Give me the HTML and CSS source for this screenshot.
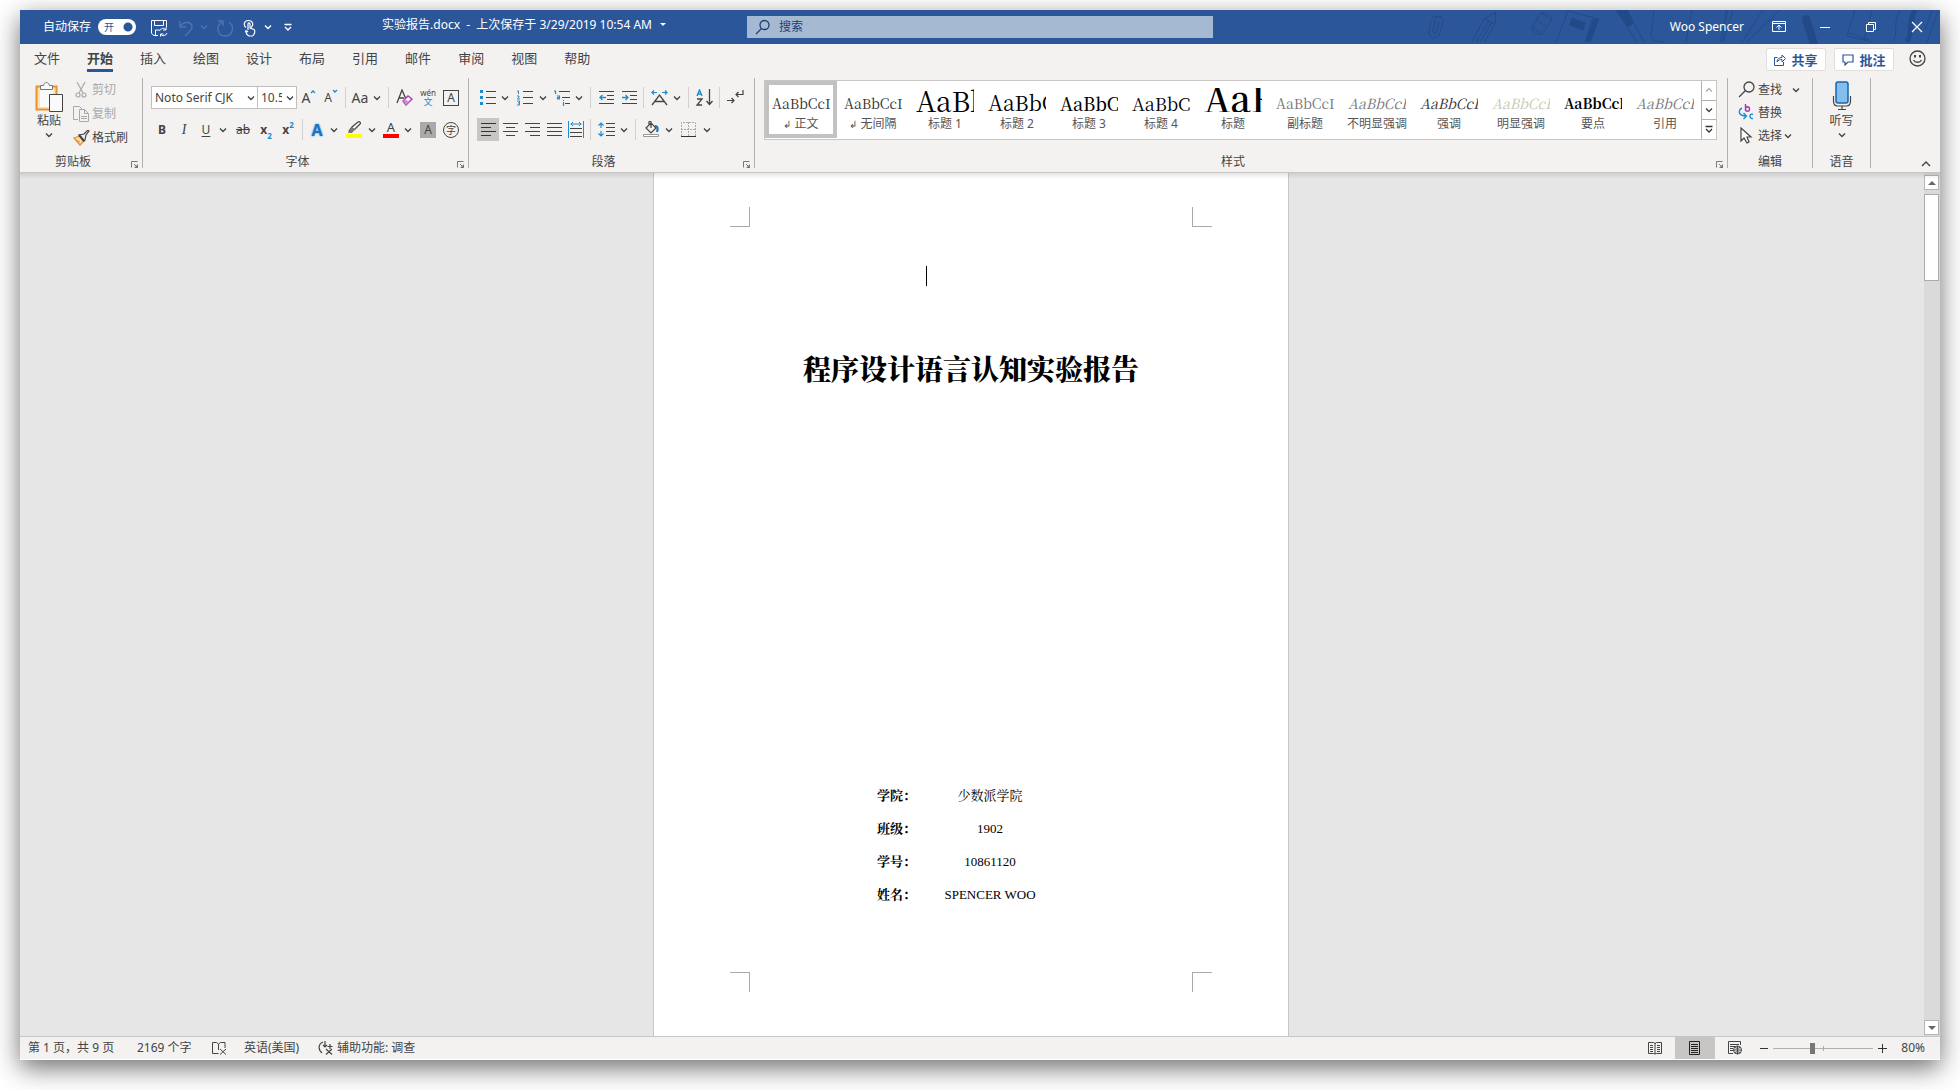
FILE: index.html
```html
<!DOCTYPE html>
<html lang="zh-CN">
<head>
<meta charset="utf-8">
<title>实验报告.docx</title>
<link rel="stylesheet" href="styles.css">
</head>
<body>
<svg class="sprite" aria-hidden="true">
  <symbol id="chev" viewBox="0 0 8 8"><path d="M1 2.500l3 3 3-3" fill="none" stroke="currentColor" stroke-width="1.400"/></symbol>
  <symbol id="launch" viewBox="0 0 8 8"><path d="M.5 6.500v-6h6M3 3l3 3" fill="none" stroke="#777"/><path d="M7 3v4H3z" fill="#777"/></symbol>
</svg>
<div class="window">
  <header class="titlebar">
    <svg class="pattern" viewBox="0 0 520 34" aria-hidden="true">
      <g fill="none" stroke="#234a88">
        <path d="M12 8c3-4 7 0 10-1M11 10l-2 12c0 7 9 8 11 1l3-13c0-5-7-5-8 0l-2 11c0 3 3 3 4 0l2-10"/>
        <path d="M76 2l-12 7-12 23M76 2l-1 12-11 18M64 9l5 2 6 3M69 11L56 32M72 12L60 32"/>
        <path d="M121 3l11 7-10 14-10-7zM116 10l11 7M121 3c2-2 12 3 11 7M112 17c-1 4 6 9 10 7"/>
        <path d="M148 1l-12 31M148 1l31 8-9 23M173 7l-8 25"/>
        <path d="M152 8l13 5-2 7-13-5z" fill="#234a88"/>
        <path d="M176 9l-8 23" stroke-width="5"/>
        <path d="M196 0h11l17 32M196 0l21 32"/><path d="M196 0h11l6 13-5 4z" fill="#234a88"/>
        <path d="M234 0l-3 25c0 5 6 7 14 7M272 0l-6 32M308 0l-8 32M313 0l-10 32M306 0l-3 32M343 0l-21 32M360 0l-33 32"/>
        <path d="M386 9l8 25" stroke-width="8" stroke-linecap="round"/>
        <path d="M435 0l-8 26 26 6M429 23l20 7M452 0l-8 30M480 0c-8 14-1 20-7 32"/>
        <path d="M495 0c-8 14-1 20-8 32" stroke-width="5"/><path d="M518 1l-11 31M512 0l-7 20"/>
      </g>
      <path d="M74 3l2-1-1 5z" fill="#234a88"/>
    </svg>
    <div class="title-left">
      <label class="autosave" for="autosave">自动保存</label>
      <span class="toggle"><input type="checkbox" id="autosave" checked><span>开</span></span>
      <button class="qat save" aria-label="保存"><svg width="18" height="18" viewBox="0 0 18 18" fill="none" stroke="#fff"><path d="M8 16.500H4l-2.500-2V1.500h15v7M4.500 1.500v5h9v-5M5.500 16v-5h4"/><path d="M9.500 12c1-3 5-3.500 6.500-1v-2.500M16 11h-3M17 14c-1 3-5 3.500-6.500 1v2.500M10.500 15h3"/></svg></button>
      <button class="qat dim undo" aria-label="撤消"><svg width="16" height="18" viewBox="0 0 16 18" fill="none" stroke="currentColor" stroke-width="1.400"><path d="M2 2v6h6M2 8C5 2 14 2 14 8c0 3-4 6-7 9"/></svg></button>
      <button class="qat dim arrow" aria-label="撤消选项"><svg width="8" height="8"><use href="#chev"/></svg></button>
      <button class="qat dim redo" aria-label="重复"><svg width="18" height="18" viewBox="0 0 18 18" fill="none" stroke="currentColor" stroke-width="1.400"><path d="M2 2h5v5M6 3C-1 8 2 17 9 17c8 0 10-10 4-14"/></svg></button>
      <button class="qat touch" aria-label="触摸模式"><svg width="14" height="18" viewBox="0 0 14 18" fill="none" stroke="#fff" stroke-width="1.200"><path d="M3 8.500C0 6 1 1.500 5.500 1.500S11 6 8 8.500M5 11V5c0-1.500 2-1.500 2 0v4l4 1.500c1.500 1 .5 6-1.500 6.500H6c-2-1-3-3-3.500-5 1-.5 2 .5 2.500 1"/></svg></button>
      <button class="qat arrow" aria-label="触摸选项"><svg width="8" height="8"><use href="#chev"/></svg></button>
      <button class="qat custom" aria-label="自定义快速访问工具栏"><svg width="8" height="9" viewBox="0 0 8 9" fill="none" stroke="#fff"><path d="M.5 1.500h7M1 4l3 3 3-3" stroke-width="1.400"/></svg></button>
      <button class="doc-name">实验报告.docx&nbsp; -&nbsp; 上次保存于 3/29/2019 10:54 AM <svg width="6" height="4"><path d="M0 0h6L3 3z" fill="#fff"/></svg></button>
    </div>
    <label class="search"><svg width="16" height="16" viewBox="0 0 16 16" fill="none" stroke="#1d3f77" stroke-width="1.300"><circle cx="9.500" cy="6" r="4.500"/><path d="M6.500 9.500L1 15"/></svg><input type="text" placeholder="搜索" aria-label="搜索"></label>
    <div class="title-right">
      <span class="user">Woo Spencer</span>
      <button class="winbtn" aria-label="功能区显示选项"><svg width="14" height="12" viewBox="0 0 14 12" fill="none" stroke="#fff"><path d="M.5.500h13v10H.500zM.5 2.500h13M7 9V4.500M4.500 6.500L7 4l2.500 2.500"/></svg></button>
      <button class="winbtn" aria-label="最小化"><svg width="10" height="12"><path d="M0 6.500h10" stroke="#fff"/></svg></button>
      <button class="winbtn" aria-label="还原"><svg width="11" height="12" viewBox="0 0 11 12" fill="none" stroke="#fff"><path d="M.5 3.500h7v7h-7zM2.500 3V1.500h7v7H8"/></svg></button>
      <button class="winbtn" aria-label="关闭"><svg width="12" height="12" viewBox="0 0 12 12" stroke="#fff" stroke-width="1.200"><path d="M1 1l10 10M11 1L1 11"/></svg></button>
    </div>
  </header>

  <nav class="tabs">
    <a href="#">文件</a><a href="#" class="active">开始</a><a href="#">插入</a><a href="#">绘图</a><a href="#">设计</a><a href="#">布局</a><a href="#">引用</a><a href="#">邮件</a><a href="#">审阅</a><a href="#">视图</a><a href="#">帮助</a>
    <div class="tab-actions">
      <button class="pill"><svg width="12" height="12" viewBox="0 0 12 12" fill="none" stroke="#2b579a"><path d="M3.500 3.500h-3v8h9V8M3 8c0-3 2-4.500 5-4.500V1l3.500 3.500L8 8V5.500C6 5.500 4.500 6 3 8z"/></svg>共享</button>
      <button class="pill"><svg width="12" height="12" viewBox="0 0 12 12" fill="none" stroke="#2b579a" stroke-width="1.200"><path d="M1 1h10v7H6l-3 3V8H1z"/></svg>批注</button>
      <button class="smile" aria-label="反馈"><svg width="17" height="17" viewBox="0 0 17 17" fill="none" stroke="#444" stroke-width="1.300"><circle cx="8.500" cy="8.500" r="7.500"/><path d="M4.500 10c1.500 3 6.500 3 8 0"/><path d="M6 5v2.500M11 5v2.500" stroke-width="2"/></svg></button>
    </div>
  </nav>

  <section class="ribbon">
    <div class="group clipboard">
      <div class="body">
        <button class="big"><svg width="28" height="32" viewBox="0 0 28 32"><path d="M1.500 5.500h20v23h-20z" fill="#fbe3b4" stroke="#e8912d" stroke-width="2"/><path d="M5 8h13v18H5z" fill="#fafafa"/><path d="M5.500 8.500v-4h3c1-4 5-4 6 0h3v4z" fill="#fafafa" stroke="#777"/><path d="M14.500 13.500h13v17h-13z" fill="#fafafa" stroke="#444"/></svg><span>粘贴</span><svg width="8" height="8"><use href="#chev"/></svg></button>
        <div class="stack spaced">
          <button class="line" disabled><svg width="18" height="16" viewBox="0 0 18 16" fill="none" stroke="#a9a9a9" stroke-width="1.200"><path d="M5 0l6 11M13 0L7 11"/><circle cx="6" cy="13" r="2"/><circle cx="12" cy="13" r="2"/></svg>剪切</button>
          <button class="line" disabled><svg width="18" height="16" viewBox="0 0 18 16" fill="none" stroke="#a9a9a9"><path d="M6 13.500H1.500v-13h6L10 3M7.500 3.500h5l4 4v8h-9zM12.500 3.500v4h4M9 10.500h6M9 12.500h6"/></svg>复制</button>
          <button class="line"><svg width="18" height="16" viewBox="0 0 18 16"><path d="M2 8l6-2 4 5-4 4-6-7z" fill="#fbd9a8" stroke="#e8912d" stroke-width="1.300"/><path d="M4 10l4 2" stroke="#e8912d"/><path d="M7 5l5-1 4-4 1 1-3 4-1 5-1 1z" fill="#eee" stroke="#444" stroke-width="1.200"/><path d="M7 5l5 6" stroke="#444" stroke-width="2"/></svg>格式刷</button>
        </div>
      </div>
      <div class="caption">剪贴板<button class="launcher" aria-label="剪贴板设置"><svg width="8" height="8"><use href="#launch"/></svg></button></div>
    </div>

    <div class="group font">
      <div class="body rows">
        <div class="row">
          <span class="combo face"><select aria-label="字体"><option>Noto Serif CJK</option></select><svg width="8" height="8"><use href="#chev"/></svg></span><span class="combo size"><select aria-label="字号"><option>10.5</option></select><svg width="8" height="8"><use href="#chev"/></svg></span>
          <button class="ib"><span class="grow">A</span><svg class="tip" width="6" height="5" fill="none" stroke="#1e8bcd" stroke-width="1.300"><path d="M1 4l2-2 2 2"/></svg></button>
          <button class="ib"><span class="shrink">A</span><svg class="tip" width="6" height="5" fill="none" stroke="#1e8bcd" stroke-width="1.300"><path d="M1 1l2 2 2-2"/></svg></button>
          <i class="sep"></i>
          <button class="ib aa">Aa</button><button class="dd" aria-label="更改大小写选项"><svg width="8" height="8"><use href="#chev"/></svg></button>
          <i class="sep"></i>
          <button class="ib wide" aria-label="清除格式"><svg width="17" height="17" viewBox="0 0 17 17" fill="none" stroke="#444" stroke-width="1.300"><path d="M1 14L6 1l3.500 8M3 9h5"/><path d="M7 12l5-5 4 3-6 6z" fill="#fff" stroke="#a33bab" stroke-width="1.400"/><path d="M7 12l2-2 4 3-3 3z" fill="#d28ad8" stroke="none"/></svg></button>
          <button class="ib wide pinyin"><span>wén</span><b>文</b></button>
          <button class="ib"><span class="boxed">A</span></button>
        </div>
        <div class="row">
          <button class="ib bold">B</button><button class="ib italic">I</button><button class="ib under">U</button><button class="dd" aria-label="下划线选项"><svg width="8" height="8"><use href="#chev"/></svg></button>
          <button class="ib wide"><s>ab</s></button><button class="ib script">x<sub>2</sub></button><button class="ib script">x<sup>2</sup></button>
          <i class="sep"></i>
          <button class="ib fx">A</button><button class="dd" aria-label="文本效果选项"><svg width="8" height="8"><use href="#chev"/></svg></button>
          <button class="ib wide" aria-label="突出显示"><svg width="16" height="17" viewBox="0 0 16 17"><path d="M3 10l3-4 6-5c2-1 3 1 2 2L9 8l-4 3z" fill="#fafafa" stroke="#444" stroke-width="1.200"/><path d="M6 6l3 2-3 4H2z" fill="#777"/><path d="M0 13h16v4H0z" fill="#ff0"/></svg></button><button class="dd" aria-label="突出显示选项"><svg width="8" height="8"><use href="#chev"/></svg></button>
          <button class="ib"><span class="red">A</span></button><button class="dd" aria-label="字体颜色选项"><svg width="8" height="8"><use href="#chev"/></svg></button>
          <button class="ib wide"><span class="shade">A</span></button><button class="ib"><span class="ring">字</span></button>
        </div>
      </div>
      <div class="caption">字体<button class="launcher" aria-label="字体设置"><svg width="8" height="8"><use href="#launch"/></svg></button></div>
    </div>

    <div class="group para">
      <div class="body rows">
        <div class="row">
          <button class="ib" aria-label="项目符号"><svg width="16" height="16"><path d="M0 0h3v3H0zM0 6h3v3H0zM0 12h3v3H0z" fill="#1e8bcd"/><path d="M6 1.500h10M6 7.500h10M6 13.500h10" stroke="#444"/></svg></button><button class="dd" aria-label="项目符号选项"><svg width="8" height="8"><use href="#chev"/></svg></button>
          <button class="ib wide" aria-label="编号"><svg width="16" height="16"><path d="M6 1.500h10M6 7.500h10M6 13.500h10" stroke="#444"/><path d="M0 1h1.500v3M0 6h2v1L.500 9H3M0 11h2.500v2H1M2.500 13v2H0" fill="none" stroke="#1e8bcd"/></svg></button><button class="dd" aria-label="编号选项"><svg width="8" height="8"><use href="#chev"/></svg></button>
          <button class="ib" aria-label="多级列表"><svg width="16" height="16"><path d="M5 1.500h11M8 7.500h8M11 13.500h5" stroke="#444"/><path d="M0 1h1.500v3M3 6h2.500v3H3.500V7.500h2M9.500 12v4M9.500 10v1" fill="none" stroke="#1e8bcd" stroke-width="1.200"/></svg></button><button class="dd" aria-label="多级列表选项"><svg width="8" height="8"><use href="#chev"/></svg></button>
          <i class="sep"></i>
          <button class="ib wide" aria-label="减少缩进"><svg width="15" height="14"><path d="M0 .500h15M8 4.500h7M8 8.500h7M0 12.500h15" stroke="#444"/><path d="M7 6.500H1M3.500 4L1 6.500 3.500 9" fill="none" stroke="#1e8bcd" stroke-width="1.300"/></svg></button>
          <button class="ib" aria-label="增加缩进"><svg width="15" height="14"><path d="M0 .500h15M8 4.500h7M8 8.500h7M0 12.500h15" stroke="#444"/><path d="M0 6.500h6M3.500 4L6 6.500 3.500 9" fill="none" stroke="#1e8bcd" stroke-width="1.300"/></svg></button>
          <i class="sep"></i>
          <button class="ib wide" aria-label="中文版式"><svg width="17" height="16" fill="none"><path d="M1 15L8.500 5 16 15M4 11.500h9" stroke="#444" stroke-width="1.300"/><path d="M6 2.500H1M3 .500L1 2.500l2 2M11 2.500h5M14 .500l2 2-2 2" stroke="#1e8bcd" stroke-width="1.200"/></svg></button><button class="dd" aria-label="中文版式选项"><svg width="8" height="8"><use href="#chev"/></svg></button>
          <i class="sep"></i>
          <button class="ib wide" aria-label="排序"><svg width="17" height="17" fill="none"><path d="M1 7l2.500-6L6 7M2 5h3" stroke="#1e8bcd" stroke-width="1.400"/><path d="M1 10h5l-5 6h5M13.500 0v15M10.500 12l3 3.500 3-3.500" stroke="#444" stroke-width="1.300"/></svg></button>
          <i class="sep"></i>
          <button class="ib wide" aria-label="显示编辑标记"><svg width="17" height="15" fill="none" stroke="#444" stroke-width="1.200"><path d="M16 0v4.500H9M11.500 2L9 4.500 11.500 7M0 10.500h7M4.500 8L7 10.500 4.500 13"/></svg></button>
        </div>
        <div class="row">
          <button class="ib on" aria-label="左对齐"><svg width="15" height="14" stroke="#333"><path d="M0 .500h15M0 4.500h10M0 8.500h15M0 12.500h10"/></svg></button><button class="ib" aria-label="居中"><svg width="15" height="14" stroke="#444"><path d="M0 .500h15M3 4.500h9M0 8.500h15M3 12.500h9"/></svg></button><button class="ib" aria-label="右对齐"><svg width="15" height="14" stroke="#444"><path d="M0 .500h15M5 4.500h10M0 8.500h15M5 12.500h10"/></svg></button><button class="ib" aria-label="两端对齐"><svg width="15" height="14" stroke="#444"><path d="M0 .500h15M0 4.500h15M0 8.500h15M0 12.500h15"/></svg></button><button class="ib" aria-label="分散对齐"><svg width="16" height="17" fill="none"><path d="M.5 0v17M15.500 0v17M2.500 3h11M5 1L3 3l2 2M11 1l2 2-2 2" stroke="#1e8bcd"/><path d="M2 7.500h12M2 11.500h12M2 15.500h12" stroke="#444"/></svg></button>
          <i class="sep"></i>
          <button class="ib wide" aria-label="行距"><svg width="17" height="15" fill="none"><path d="M3 1v5M3 9v5M.500 3.500L3 1l2.500 2.500M.500 11.500L3 14l2.500-2.500" stroke="#1e8bcd" stroke-width="1.200"/><path d="M8 1.500h9M8 5.500h9M8 9.500h9M8 13.500h9" stroke="#444"/></svg></button><button class="dd" aria-label="行距选项"><svg width="8" height="8"><use href="#chev"/></svg></button>
          <i class="sep"></i>
          <button class="ib wide" aria-label="底纹"><svg width="17" height="17" fill="none"><path d="M3 7l5-5 5 5-5 5zM8 7V1c0-1-2-1-2 0v3" stroke="#444" stroke-width="1.200"/><path d="M12 5c3 0 3 3 2 6" stroke="#2372b9" stroke-width="2.200"/><path d="M.5 13.500h15v2H.500z" fill="#fff" stroke="#999"/></svg></button><button class="dd" aria-label="底纹选项"><svg width="8" height="8"><use href="#chev"/></svg></button>
          <button class="ib wide" aria-label="边框"><svg width="16" height="16" fill="none"><path d="M.5 14V.500h14V14M7.500 0v14M0 7.500h15" stroke="#aaa" stroke-dasharray="2 1"/><path d="M0 14.500h15" stroke="#333"/></svg></button><button class="dd" aria-label="边框选项"><svg width="8" height="8"><use href="#chev"/></svg></button>
        </div>
      </div>
      <div class="caption">段落<button class="launcher" aria-label="段落设置"><svg width="8" height="8"><use href="#launch"/></svg></button></div>
    </div>

    <div class="group styles">
      <div class="body">
        <div class="gallery">
          <button class="style sel"><span class="sample">AaBbCcDd</span><span class="name"><small>↲</small> 正文</span></button>
          <button class="style"><span class="sample">AaBbCcDd</span><span class="name"><small>↲</small> 无间隔</span></button>
          <button class="style"><span class="sample h1">AaBb</span><span class="name">标题 1</span></button>
          <button class="style"><span class="sample h2">AaBbC</span><span class="name">标题 2</span></button>
          <button class="style"><span class="sample h3">AaBbC</span><span class="name">标题 3</span></button>
          <button class="style"><span class="sample h4">AaBbC</span><span class="name">标题 4</span></button>
          <button class="style"><span class="sample ttl">AaB</span><span class="name">标题</span></button>
          <button class="style"><span class="sample subtitle">AaBbCcDd</span><span class="name">副标题</span></button>
          <button class="style"><span class="sample em subtle">AaBbCcDd</span><span class="name">不明显强调</span></button>
          <button class="style"><span class="sample em">AaBbCcDd</span><span class="name">强调</span></button>
          <button class="style"><span class="sample em intense">AaBbCcDd</span><span class="name">明显强调</span></button>
          <button class="style"><span class="sample strong">AaBbCcDd</span><span class="name">要点</span></button>
          <button class="style"><span class="sample em subtle">AaBbCcDd</span><span class="name">引用</span></button>
          <div class="gallery-nav">
            <button disabled aria-label="上一行"><svg class="flip" width="8" height="8"><use href="#chev"/></svg></button><button aria-label="下一行"><svg width="8" height="8"><use href="#chev"/></svg></button><button aria-label="更多样式"><svg width="8" height="9" viewBox="0 0 8 9" fill="none" stroke="#333"><path d="M.5 1.500h7M1 4l3 3 3-3" stroke-width="1.300"/></svg></button>
          </div>
        </div>
      </div>
      <div class="caption">样式<button class="launcher" aria-label="样式设置"><svg width="8" height="8"><use href="#launch"/></svg></button></div>
    </div>

    <div class="group edit">
      <div class="body">
        <div class="stack">
          <button class="line"><svg width="18" height="17" viewBox="0 0 18 17" fill="none" stroke="#444" stroke-width="1.300"><circle cx="11" cy="6" r="5"/><path d="M7.500 9.500L1 16"/></svg>查找<svg class="far" width="8" height="8"><use href="#chev"/></svg></button>
          <button class="line"><svg width="18" height="17" viewBox="0 0 18 17" fill="none" stroke-width="1.400"><path d="M7.500 0v7M7.500 5c0-3 4-3 4 0s-4 3-4 0" stroke="#a33bab"/><path d="M4 4C0 6 0 12 8 12M5.500 9L8.500 12 5.500 15M15 10.500c-4-2-4 5 0 4" stroke="#1e8bcd"/></svg>替换</button>
          <button class="line"><svg width="18" height="17" viewBox="0 0 18 17" fill="#fff" stroke="#444" stroke-width="1.200"><path d="M3 1v13l3-3 3 5 2-1-2-5h4z"/></svg>选择<svg class="near" width="8" height="8"><use href="#chev"/></svg></button>
        </div>
      </div>
      <div class="caption">编辑</div>
    </div>

    <div class="group voice">
      <div class="body"><button class="big"><svg width="20" height="32" viewBox="0 0 20 32" fill="none"><rect x="4" y="1" width="12" height="21" rx="2" fill="#83beec" stroke="#1565b0" stroke-width="1.500"/><path d="M1.500 15v5c0 3 1 5 4 5h9c3 0 4-2 4-5v-5M10 25v3M6 28.500h8" stroke="#444" stroke-width="1.200"/></svg><span>听写</span><svg width="8" height="8"><use href="#chev"/></svg></button></div>
      <div class="caption">语音</div>
    </div>
    <div class="ribbon-end"><button class="collapse" aria-label="折叠功能区"><svg width="10" height="6" fill="none" stroke="#444" stroke-width="1.400"><path d="M1 5l4-4 4 4"/></svg></button></div>
  </section>

  <main class="workspace">
    <article class="page">
      <div class="marks top"><i></i><i></i></div>
      <div class="caret"></div>
      <h1>程序设计语言认知实验报告</h1>
      <table>
        <tr><th>学院：</th><td>少数派学院</td></tr>
        <tr><th>班级：</th><td>1902</td></tr>
        <tr><th>学号：</th><td>10861120</td></tr>
        <tr><th>姓名：</th><td>SPENCER WOO</td></tr>
      </table>
      <div class="marks bottom"><i></i><i></i></div>
    </article>
    <div class="scrollbar">
      <button aria-label="向上滚动"><svg width="8" height="4"><path d="M4 0l4 4H0z" fill="#666"/></svg></button>
      <div class="thumb"></div>
      <button aria-label="向下滚动"><svg width="8" height="4"><path d="M0 0h8L4 4z" fill="#666"/></svg></button>
    </div>
  </main>

  <footer class="status">
    <span class="pages">第 1 页，共 9 页</span>
    <span class="words">2169 个字</span>
    <button class="proof" aria-label="校对"><svg width="15" height="13" viewBox="0 0 15 13" fill="none" stroke="#444"><path d="M6.500 11.500h-6V.500h4l2 1.500v6M6.500 2l2-1.500h4.500V6M8 7l6 5.500M14 7l-6 5.500"/></svg></button>
    <span class="lang">英语(美国)</span>
    <span class="access"><svg width="16" height="14" viewBox="0 0 16 14" fill="none" stroke="#444" stroke-width="1.200"><path d="M5 1C0 3 0 9 4 12M7 0v6M5 4l2 2 2-2M12 3v5M9.500 5.500h5M8 8l6 5.500M14 8l-6 5.500"/></svg>辅助功能: 调查</span>
    <div class="views">
      <button aria-label="阅读视图"><svg width="14" height="14" fill="none" stroke="#444"><path d="M.5 1.500h5l1.500 1 1.500-1h5v11h-5L7 13l-1.500-.500h-5zM7 2v11M2 4.500h3M2 6.500h3M2 8.500h3M2 10.500h3M9 4.500h3M9 6.500h3M9 8.500h3M9 10.500h3"/></svg></button>
      <button class="on" aria-label="页面视图"><svg width="12" height="14" fill="none" stroke="#222"><path d="M.5.500h10v13H.500zM2 3.500h7M2 5.500h7M2 7.500h7M2 9.500h7M2 11.500h7"/></svg></button>
      <button aria-label="Web 版式视图"><svg width="15" height="14" fill="none" stroke="#444"><path d="M5 12.500H.500V.500h12V4M2 3.500h9M2 5.500h5M2 7.500h3M2 9.500h3"/><circle cx="9.500" cy="9" r="4"/><path d="M5.500 9h8M9.500 5v8M7 6.500c2 1 3 1 5 0M7 11.500c2-1 3-1 5 0"/></svg></button>
    </div>
    <button class="zoom-btn" aria-label="缩小"><svg width="8" height="9"><path d="M0 4.500h8" stroke="#333"/></svg></button>
    <input class="zoom" type="range" min="0" max="100" value="39" aria-label="缩放">
    <button class="zoom-btn" aria-label="放大"><svg width="9" height="9"><path d="M0 4.500h9M4.500 0v9" stroke="#333"/></svg></button>
    <span class="percent">80%</span>
  </footer>
</div>
</body>
</html>
```
FILE: styles.css
```css
* { box-sizing: border-box; }
html { height: 100%; }
body {
  margin: 0;
  height: 100%;
  padding: 10px 20px 30px;
  background: #fff;
  color: #444;
  font: 12px/16px "Noto Sans", "Noto Sans CJK SC", sans-serif;
  overflow: hidden;
}
button, input, select { font: inherit; color: inherit; }
button { border: 0; padding: 0; background: none; display: flex; align-items: center; justify-content: center; flex: none; white-space: nowrap; }
svg { flex: none; display: block; }
.sprite { position: absolute; width: 0; height: 0; }

.window {
  display: flex;
  flex-direction: column;
  height: 100%;
  background: #f3f2f1;
  box-shadow: 0 8px 24px rgba(0, 0, 0, .57);
}

/* Title bar */
.titlebar {
  position: relative;
  display: grid;
  grid-template-columns: 1fr minmax(200px, 466px) 1fr;
  height: 34px;
  flex: none;
  background: #2b579a;
  color: #fff;
}
.pattern { position: absolute; right: 0; top: 0; width: 520px; height: 34px; }
.title-left { display: flex; align-items: center; padding-left: 23px; min-width: 0; }
.toggle { display: grid; align-items: center; width: 38px; height: 16px; margin: 0 13px 0 7px; }
.toggle input { grid-area: 1 / 1; appearance: none; margin: 0; width: 38px; height: 16px; border-radius: 8px; background: radial-gradient(circle at 30px 8px, #2b579a 4px, #fff 5px); }
.toggle span { grid-area: 1 / 1; z-index: 1; padding-left: 6px; font-size: 10px; line-height: 16px; color: #2b579a; }
.qat { height: 34px; }
.save { width: 20px; padding-top: 2px; }
.undo { width: 22px; margin-left: 6px; padding-top: 2px; }
.redo { width: 28px; padding-top: 2px; }
.touch { width: 22px; padding-top: 2px; }
.arrow { width: 14px; }
.dim { color: #4c74b0; }
.custom { width: 26px; }
.doc-name { gap: 8px; margin: 0 auto; height: 30px; align-self: flex-start; }
.search { display: flex; align-items: center; gap: 8px; height: 22px; margin-top: 6px; padding: 0 8px; background: #a6b9d3; color: #1d3f77; }
.search input { border: 0; padding: 0; flex: 1; min-width: 0; background: none; outline: 0; }
.search input::placeholder { color: #1d3f77; opacity: 1; }
.title-right { display: flex; justify-content: flex-end; align-items: center; position: relative; }
.user { margin-right: 12px; }
.winbtn { width: 46px; height: 34px; }

/* Tabs */
.tabs { display: flex; align-items: flex-start; gap: 27px; height: 32px; padding: 4px 14px 0; flex: none; font-size: 13px; line-height: 20px; }
.tabs a { color: #444; text-decoration: none; padding-bottom: 1px; border-bottom: 3px solid transparent; white-space: nowrap; }
.tabs a.active { font-weight: 700; border-color: #2b579a; }
.tab-actions { display: flex; gap: 8px; margin-left: auto; }
.pill { gap: 5px; width: 60px; height: 23px; border: 1px solid #e1dfdd; border-radius: 2px; background: #fff; color: #2b579a; font-weight: 700; }
.smile { width: 18px; height: 20px; margin-left: 6px; }

/* Ribbon */
.ribbon { display: flex; height: 97px; padding: 2px 0 4px; flex: none; border-bottom: 1px solid #c8c6c4; }
.group { display: flex; flex-direction: column; flex: none; border-right: 1px solid #b3b0ad; }
.clipboard { width: 123px; }
.font { width: 326px; }
.para { width: 286px; }
.styles { flex: 1; min-width: 0; }
.edit { width: 85px; }
.voice { width: 58px; }
.body { display: flex; height: 77px; flex: none; }
.caption { display: flex; justify-content: center; height: 14px; line-height: 14px; padding-right: 16px; position: relative; }
.edit .caption, .voice .caption { padding-right: 0; }
.launcher { position: absolute; right: 3px; bottom: 0; }
.body.rows { flex-direction: column; gap: 9px; padding: 8px 0 0 8px; }
.row { display: flex; align-items: center; height: 23px; }
.ib { width: 22px; height: 23px; }
.ib.wide { width: 24px; }
.ib.on { background: #c8c6c4; }
.dd { width: 14px; height: 23px; padding-right: 2px; }
.sep { width: 1px; height: 21px; margin: 0 3px; background: #d2d0ce; flex: none; }
.big { flex-direction: column; justify-content: flex-start; padding-top: 3px; width: 60px; }
.big span { line-height: 16px; margin-bottom: 2px; }
.clipboard .big { width: 52px; padding-left: 6px; }
.voice .big { width: 57px; }
.stack { display: flex; flex-direction: column; }
.stack.spaced { gap: 1px; }
.line { height: 23px; gap: 2px; justify-content: flex-start; }
.line:disabled { color: #a9a9a9; }
.edit .stack { padding-left: 10px; }
.far { margin-left: 8px; }

.combo { display: grid; height: 23px; border: 1px solid #c1bfbd; background: #fff; align-items: center; justify-items: end; }
.combo select { grid-area: 1 / 1; appearance: none; width: 100%; height: 21px; padding: 0 14px 0 3px; border: 0; border-radius: 0; background: none; }
.combo svg { grid-area: 1 / 1; margin-right: 2px; pointer-events: none; }
.face { width: 107px; }
.size { width: 40px; margin-left: -1px; margin-right: 1px; }
.grow { font-size: 14px; }
.shrink { font-size: 12px; }
.tip { align-self: flex-start; margin-top: 3px; }
.aa { font-size: 14px; }
.pinyin { flex-direction: column; font-size: 8px; line-height: 8px; }
.pinyin b { color: #1e8bcd; font-weight: 400; font-size: 9px; line-height: 9px; }
.boxed { width: 16px; height: 16px; border: 1px solid #444; line-height: 14px; }
.bold { font-weight: 700; }
.italic { font-family: "Liberation Serif", serif; font-style: italic; font-size: 14px; }
.under { text-decoration: underline; text-underline-offset: 2px; }
.script { font-weight: 700; }
.script sub, .script sup { font-size: 8px; line-height: 8px; color: #1e8bcd; }
.script sub { padding-top: 12px; }
.script sup { padding-bottom: 10px; }
.fx { font-size: 16px; font-weight: 700; color: #1e72bd; text-shadow: 0 0 2px #7dbcec, 0 0 2px #7dbcec; }
.red { width: 16px; height: 17px; font-size: 13px; line-height: 12px; border-bottom: 4px solid #f00; }
.shade { width: 16px; height: 16px; background: #aaa; }
.ring { width: 16px; height: 16px; border: 1px solid #444; border-radius: 8px; font-size: 10px; line-height: 14px; }

/* Style gallery */
.styles .body { padding: 2px 10px 0 9px; }
.gallery { display: flex; width: 100%; height: 60px; border: 1px solid #c8c6c4; background: #fff; }
.style { flex: 1 1 0; min-width: 0; flex-direction: column; justify-content: flex-start; height: 57px; padding: 3px 3px 0; border: 4px solid transparent; }
.style.sel { border-color: #c3c2c1; }
.sample { width: 100%; height: 24px; overflow: hidden; display: flex; align-items: flex-end; color: #333; font: 14px/16px "Noto Serif CJK SC", "Liberation Serif", serif; padding-bottom: 1px; flex: none; }
.name { line-height: 18px; margin-top: 3px; color: #555; }
.name small { font-size: 10px; }
.sample.h1 { font-size: 28px; line-height: 22px; color: #000; }
.sample.h2 { font-size: 21px; line-height: 18px; color: #000; }
.sample.h3 { font-size: 18px; line-height: 16px; font-weight: 500; color: #000; }
.sample.h4 { font-size: 18px; line-height: 16px; color: #000; }
.sample.ttl { font-size: 36px; line-height: 26px; font-weight: 600; color: #000; }
.sample.subtitle { color: #777; }
.em { font-style: italic; }
.sample.subtle { color: #777; }
.sample.intense { color: #c2cab0; }
.sample.strong { font-weight: 700; color: #000; }
.gallery-nav { display: flex; flex-direction: column; width: 15px; flex: none; border-left: 1px solid #b3b0ad; }
.gallery-nav button { flex: 1; border-bottom: 1px solid #b3b0ad; }
.gallery-nav button:last-child { border: 0; }
.gallery-nav button:disabled { color: #b3b0ad; }
.flip { transform: rotate(180deg); }
.ribbon-end { display: flex; align-items: flex-end; justify-content: flex-end; width: 69px; flex: none; padding-right: 4px; }
.collapse { width: 20px; height: 8px; }

/* Document */
.workspace { position: relative; display: flex; flex: 1; min-height: 0; overflow: hidden; background: #e6e6e6; }
.workspace::before { content: ""; position: absolute; left: 0; right: 0; top: 0; height: 6px; background: linear-gradient(rgba(0, 0, 0, .1), transparent); }
.page { width: 636px; height: 898px; flex: none; margin: 0 auto; padding: 34px 76px 0; background: #fff; border: solid #c6c6c6; border-width: 0 1px; }
.marks { display: flex; justify-content: space-between; }
.marks i { width: 20px; height: 20px; border: 0 solid #aaa; }
.top i { border-bottom-width: 1px; }
.bottom i { border-top-width: 1px; }
.marks i:first-child { border-right-width: 1px; }
.marks i:last-child { border-left-width: 1px; }
.caret { width: 1px; height: 20px; margin: 39px 0 0 196px; background: #000; }
.page h1 { margin: 62px 0 0; text-align: center; color: #000; font: 900 28px/40px "Noto Serif CJK SC", "Noto Sans CJK SC", serif; white-space: nowrap; }
.page table { border-collapse: collapse; margin: 391px 0 61px 147px; color: #000; font: 13px/33px "Liberation Serif", "Noto Serif CJK SC", "Noto Sans CJK SC", serif; }
.page th, .page td { padding: 0; white-space: nowrap; }
.page th { width: 49px; text-align: left; font-weight: 700; }
.page td { width: 128px; text-align: center; }
.scrollbar { display: flex; flex-direction: column; width: 16px; margin-left: 2px; padding: 2px 1px 1px 0; background: #dadada; }
.scrollbar button { height: 15px; background: #fff; border: 1px solid #b5b5b5; }
.thumb { height: 87px; margin: 4px 0 auto; background: #fff; border: 1px solid #ababab; }

/* Status bar */
.status { display: flex; align-items: center; height: 24px; flex: none; padding: 0 15px 0 8px; border-top: 1px solid #c6c6c6; border-bottom: 1px solid #fff; white-space: nowrap; }
.pages { min-width: 90px; }
.words { min-width: 56px; margin-left: 19px; }
.proof { margin: 0 17px 0 19px; }
.lang { min-width: 56px; }
.access { display: flex; align-items: center; gap: 3px; margin-left: 18px; }
.views { display: flex; margin-left: auto; }
.views button { width: 40px; height: 22px; }
.views .on { background: #c8c6c4; }
.zoom-btn { width: 18px; height: 22px; }
.zoom { appearance: none; width: 100px; height: 12px; margin: 0; background: linear-gradient(#aaa, #aaa) 50px 50% / 1px 5px no-repeat, linear-gradient(#b3b0ad, #b3b0ad) 0 50% / 100% 1px no-repeat; }
.zoom::-webkit-slider-thumb { appearance: none; width: 5px; height: 11px; background: #777; }
.percent { margin-left: 10px; }
```
